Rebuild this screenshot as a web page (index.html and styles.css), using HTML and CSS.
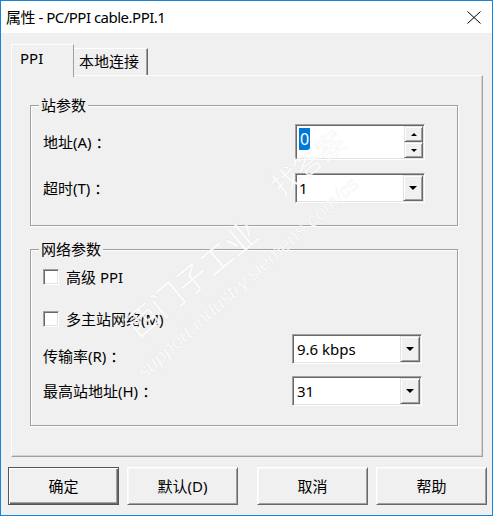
FILE: index.html
```html
<!DOCTYPE html>
<html lang="zh-CN">
<head>
<meta charset="utf-8">
<title>属性 - PC/PPI cable.PPI.1</title>
<link rel="stylesheet" href="styles.css">
</head>
<body>
<div class="window">
  <div class="titlebar">
    <span class="title">属性 - PC/PPI cable.PPI.1</span>
    <svg class="close" width="14" height="13" viewBox="0 0 14 13"><path d="M0.5 0.5 L13.5 12.5 M13.5 0.5 L0.5 12.5" stroke="#000" stroke-width="1" fill="none"/></svg>
  </div>
  <div class="client">
    <div class="tabs">
      <div class="tab active">PPI</div>
      <div class="tab inactive">本地连接</div>
    </div>
    <div class="panel">
      <fieldset class="group g1">
        <legend>站参数</legend>
        <div class="row srow1">
          <span class="label">地址(A)<span class="colon">：</span></span>
          <div class="spin">
            <div class="field"><span class="sel">0</span></div>
            <div class="spinbtns">
              <div class="sbtn"><span class="tri-up"></span></div>
              <div class="sbtn"><span class="tri-down-s"></span></div>
            </div>
          </div>
        </div>
        <div class="row srow2">
          <span class="label">超时(T)<span class="colon">：</span></span>
          <div class="combo">
            <div class="value">1</div>
            <div class="drop"><span class="tri-down"></span></div>
          </div>
        </div>
      </fieldset>
      <fieldset class="group g2">
        <legend>网络参数</legend>
        <div class="check c1"><span class="box"></span><span>高级 PPI</span></div>
        <div class="check c2"><span class="box"></span><span>多主站网络(M)</span></div>
        <div class="row crow1">
          <span class="label low">传输率(R)<span class="colon">：</span></span>
          <div class="combo">
            <div class="value v2">9.6 kbps</div>
            <div class="drop"><span class="tri-down"></span></div>
          </div>
        </div>
        <div class="row crow2">
          <span class="label">最高站地址(H)<span class="colon">：</span></span>
          <div class="combo">
            <div class="value v2">31</div>
            <div class="drop"><span class="tri-down"></span></div>
          </div>
        </div>
      </fieldset>
    </div>
    <div class="buttons">
      <button class="btn default">确定</button>
      <button class="btn">默认(D)</button>
      <button class="btn sep">取消</button>
      <button class="btn">帮助</button>
    </div>
  </div>
  <div class="wm wm-cn">西门子工业</div>
  <div class="wm wm-url">support.industry.siemens.com/cs</div>
  <div class="wm wm-zda">找答案</div>
</div>
</body>
</html>
```

FILE: styles.css
```css
* { box-sizing: border-box; }
html, body { margin: 0; padding: 0; background: #f0f0f0; }
body {
  font-family: "Noto Sans", "Noto Sans CJK SC", sans-serif;
  font-size: 15px;
  color: #000;
}
.window {
  width: 493px;
  height: 516px;
  border: 1px solid #1883d7;
  background: #f0f0f0;
  position: relative;
  overflow: hidden;
  display: flex;
  flex-direction: column;
}
.titlebar {
  height: 32px;
  flex-shrink: 0;
  background: #fff;
  display: flex;
  align-items: center;
  padding-left: 5px;
}
.title { font-size: 15px; line-height: 20px; letter-spacing: -0.5px; }
.close { margin-left: auto; margin-right: 11px; display: block; }

.client { padding: 11px 9px 0 10px; }

.tabs { display: flex; align-items: flex-end; height: 31px; }
.tab {
  background: #f0f0f0;
  border-style: solid;
  border-width: 1px 1px 0 1px;
  line-height: 20px;
}
.tab.active {
  width: 63px;
  height: 33px;
  margin-bottom: -2px;
  position: relative;
  z-index: 1;
  padding: 3px 0 0 8px;
  border-color: #fff #a0a0a0 transparent #fff;
}
.tab.inactive {
  width: 74px;
  height: 27px;
  padding: 2px 0 0 5px;
  border-left-width: 0;
  border-color: #fff #696969 transparent transparent;
  box-shadow: inset -1px 0 0 #a0a0a0;
}

.panel {
  height: 382px;
  border-style: solid;
  border-width: 1px;
  border-color: #fff #a0a0a0 #a0a0a0 #fff;
  box-shadow: inset -1px -1px 0 #d4d4d4;
  padding-top: 19px;
}

.group {
  margin: 0 0 0 18px;
  width: 428px;
  min-width: 0;
  border: 1px solid #a0a0a0;
  box-shadow: 1px 1px 0 #fff, inset 1px 1px 0 #fff;
}
.group legend {
  padding: 0 2px;
  margin-left: -4px;
  line-height: 20px;
  font-size: 15px;
  background: #f0f0f0;
}
.g1 { padding: 9px 32px 22px 12px; }
.g2 { margin-top: 13px; padding: 8px 35px 19px 12px; }

.row { display: flex; align-items: center; justify-content: space-between; }
.label { line-height: 20px; }
.colon { margin-left: 4px; }
.label.low { align-self: flex-start; margin-top: 12px; }
.srow1 { height: 36px; }
.srow2 { height: 30px; margin-top: 13px; }
.crow1 { height: 30px; margin-top: 5px; }
.crow2 { height: 30px; margin-top: 12px; }

.spin, .combo {
  width: 130px;
  background: #fff;
  border-style: solid;
  border-width: 1px;
  border-color: #a0a0a0 #fff #fff #a0a0a0;
  box-shadow: inset 1px 1px 0 #696969, inset -1px -1px 0 #e3e3e3;
  padding: 1px;
  display: flex;
}
.spin { height: 36px; }
.combo { height: 30px; }
.field { flex: 1; padding: 2px 0 0 2px; }
.sel {
  display: inline-block;
  background: #0078d7;
  color: #fff;
  line-height: 22px;
  padding: 0 1px;
  font-size: 16px;
}
.spinbtns { width: 19px; display: flex; flex-direction: column; }
.sbtn, .drop {
  background: #f0f0f0;
  border-style: solid;
  border-width: 1px;
  border-color: #e3e3e3 #696969 #696969 #e3e3e3;
  box-shadow: inset 1px 1px 0 #fff, inset -1px -1px 0 #a0a0a0;
  display: flex;
  align-items: center;
  justify-content: center;
}
.sbtn { height: 16px; }
.drop { width: 20px; }
.value { flex: 1; padding-left: 2px; line-height: 26px; }
.value.v2 { padding-left: 3px; }
.tri-up { width: 0; height: 0; border-left: 3px solid transparent; border-right: 3px solid transparent; border-bottom: 3px solid #000; }
.tri-down-s { width: 0; height: 0; border-left: 3px solid transparent; border-right: 3px solid transparent; border-top: 3px solid #000; }
.tri-down { width: 0; height: 0; border-left: 4px solid transparent; border-right: 4px solid transparent; border-top: 4px solid #000; }

.check { display: flex; align-items: center; height: 20px; line-height: 20px; }
.check.c2 { margin-top: 22px; }
.box {
  width: 16px;
  height: 16px;
  margin-right: 7px;
  background: #fff;
  border-style: solid;
  border-width: 1px;
  border-color: #a0a0a0 #fff #fff #a0a0a0;
  box-shadow: inset 1px 1px 0 #696969, inset -1px -1px 0 #e3e3e3;
}

.buttons { display: flex; gap: 8px; margin: 10px 0 0 -3px; }
.btn {
  flex-shrink: 0;
  width: 111px;
  height: 38px;
  font-family: inherit;
  font-size: 15px;
  color: #000;
  background: #f0f0f0;
  border-style: solid;
  border-width: 1px;
  border-color: #fff #696969 #696969 #fff;
  box-shadow: inset 1px 1px 0 #f8f8f8, inset -1px -1px 0 #a0a0a0;
  padding: 0;
  line-height: 20px;
}
.btn.default {
  border-color: #555;
  box-shadow: inset 1px 1px 0 #fff, inset -1px -1px 0 #696969, inset -2px -2px 0 #a0a0a0;
}
.btn.sep { margin-left: 11px; }

.wm {
  position: absolute;
  left: 0;
  top: 0;
  transform-origin: 0 0;
  white-space: nowrap;
  pointer-events: none;
  color: rgba(255, 255, 255, 0.9);
  -webkit-text-stroke: 0.5px rgba(170, 170, 170, 0.2);
  font-family: "Liberation Sans", "Noto Sans CJK SC", sans-serif;
  line-height: 1;
}
.wm-cn { left: 120px; top: 318px; font-size: 32px; transform: rotate(-40deg); }
.wm-url { left: 132px; top: 366px; font-size: 20px; font-style: italic; transform: rotate(-42deg); }
.wm-zda { left: 266px; top: 178px; font-size: 28px; transform: rotate(-38deg); }
```
